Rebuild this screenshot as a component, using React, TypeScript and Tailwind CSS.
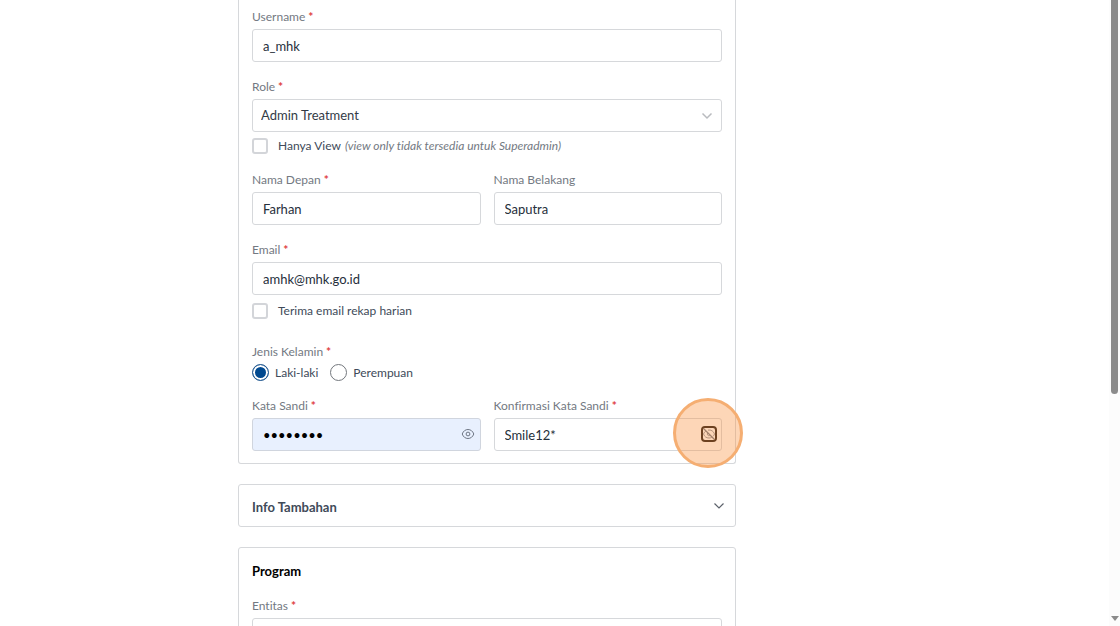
import { useState } from "react";
import type { InputHTMLAttributes, ReactNode } from "react";

const inputClass =
  "block h-[33px] w-full rounded-[3px] border border-[#d6d8db] bg-white px-[10px] pt-px text-[13px] text-[#262f3b] outline-none";

function Required() {
  return <span className="ml-[3px] font-bold text-[#e0403f]">*</span>;
}

function Label({
  htmlFor,
  required,
  children,
}: {
  htmlFor: string;
  required?: boolean;
  children: ReactNode;
}) {
  return (
    <label htmlFor={htmlFor} className="mb-1 block text-xs text-[#737982]">
      {children}
      {required && <Required />}
    </label>
  );
}

function Field({
  id,
  label,
  required,
  ...props
}: {
  id: string;
  label: string;
  required?: boolean;
} & InputHTMLAttributes<HTMLInputElement>) {
  return (
    <div>
      <Label htmlFor={id} required={required}>
        {label}
      </Label>
      <input id={id} className={inputClass} {...props} />
    </div>
  );
}

function Checkbox({ id, children }: { id: string; children: ReactNode }) {
  return (
    <div className="flex h-4 items-center">
      <input
        id={id}
        type="checkbox"
        className="size-4 appearance-none rounded-[3px] border-2 border-[#d3d5d9] bg-white checked:bg-[#004990]"
      />
      <label htmlFor={id} className="pl-[10px] text-xs text-[#404a59]">
        {children}
      </label>
    </div>
  );
}

function Radio({
  id,
  label,
  defaultChecked,
}: {
  id: string;
  label: string;
  defaultChecked?: boolean;
}) {
  return (
    <div className="flex items-center gap-[6px]">
      <input
        id={id}
        type="radio"
        name="gender"
        defaultChecked={defaultChecked}
        className="size-[17px] appearance-none rounded-full border border-[#73777d] bg-white checked:border-[#2c5f94] checked:bg-[#004990] checked:shadow-[inset_0_0_0_2px_white]"
      />
      <label htmlFor={id} className="text-xs text-[#404a59]">
        {label}
      </label>
    </div>
  );
}

function Chevron({ className }: { className?: string }) {
  return (
    <svg viewBox="0 0 12 8" fill="none" stroke="currentColor" className={className}>
      <path d="M1.5 1.5 6 6l4.5-4.5" />
    </svg>
  );
}

function Eye() {
  return (
    <svg viewBox="0 0 14 14" fill="none" stroke="currentColor" className="size-[14px]">
      <path d="M1.2 7C2.3 4 4.5 2.5 7 2.5S11.7 4 12.8 7C11.7 10 9.5 11.5 7 11.5S2.3 10 1.2 7Z" />
      <circle cx="7" cy="7" r="1.9" />
    </svg>
  );
}

function EyeOff() {
  return (
    <svg viewBox="0 0 14 14" fill="none" stroke="currentColor" className="size-[14px]">
      <path d="M2 2l10 10" strokeWidth="1.2" />
      <path
        d="M4 3.8C2.8 4.6 2 5.700 1.500 7 2.500 9.800 4.500 11 7 11c1 0 1.900-.2 2.700-.6M6 3.100C9 2.600 11.500 4 12.500 7c-.3.900-.8 1.700-1.400 2.300M5.600 6a1.800 1.800 0 0 0 2.300 2.600"
        strokeWidth="0.8"
      />
    </svg>
  );
}

function Card({ children }: { children: ReactNode }) {
  return (
    <section className="rounded-[3px] border border-[#d6d8db] bg-white px-[13px]">
      {children}
    </section>
  );
}

export default function App() {
  const [showPassword, setShowPassword] = useState(false);
  const [showConfirm, setShowConfirm] = useState(true);

  return (
    <div className="flex h-screen overflow-hidden bg-white font-[Lato,sans-serif] [font-variant-ligatures:none]">
      <main className="min-w-0 flex-1 overflow-hidden pl-[238px]">
        <form className="flex w-full max-w-[498px] flex-col gap-5">
          {/* account */}
          <section className="rounded-b-[3px] border border-t-0 border-[#d6d8db] px-[13px] pt-[9px] pb-3">
            <div className="flex flex-col gap-[17px]">
              <Field id="username" label="Username" required defaultValue="a_mhk" />

              <div>
                <Label htmlFor="role" required>
                  Role
                </Label>
                <div className="relative">
                  <select
                    id="role"
                    className="block h-[33px] w-full appearance-none rounded-[3px] border border-[#d6d8db] bg-white px-2 pt-px text-[13px] text-[#333b46] outline-none"
                  >
                    <option>Admin Treatment</option>
                  </select>
                  <Chevron className="pointer-events-none absolute top-[13px] right-[9px] h-2 w-3 stroke-[1.5] text-[#b9bbbf]" />
                </div>
                <div className="mt-[6px] pb-px">
                  <Checkbox id="view-only">
                    Hanya View
                    <em className="ml-1 text-[#737982]">
                      (view only tidak tersedia untuk Superadmin)
                    </em>
                  </Checkbox>
                </div>
              </div>

              <div className="grid grid-cols-2 gap-[13px]">
                <Field id="first-name" label="Nama Depan" required defaultValue="Farhan" />
                <Field id="last-name" label="Nama Belakang" defaultValue="Saputra" />
              </div>

              <div>
                <Field
                  id="email"
                  label="Email"
                  type="email"
                  required
                  defaultValue="amhk@mhk.go.id"
                />
                <div className="mt-2">
                  <Checkbox id="daily-email">Terima email rekap harian</Checkbox>
                </div>
              </div>
            </div>

            {/* gender */}
            <fieldset className="mt-[25px]">
              <legend className="text-xs text-[#737982]">
                Jenis Kelamin
                <Required />
              </legend>
              <div className="mt-1 flex gap-3">
                <Radio id="male" label="Laki-laki" defaultChecked />
                <Radio id="female" label="Perempuan" />
              </div>
            </fieldset>

            {/* password */}
            <div className="mt-[17px] grid grid-cols-2 gap-[13px]">
              <div>
                <Label htmlFor="password" required>
                  Kata Sandi
                </Label>
                <div className="relative">
                  <input
                    id="password"
                    type={showPassword ? "text" : "password"}
                    defaultValue="Smile12*"
                    className="block h-[33px] w-full rounded-[3px] border border-[#d0d5de] bg-[#e8f0fe] px-[10px] pt-px text-[13px] text-black outline-none"
                  />
                  <button
                    type="button"
                    aria-label="Tampilkan kata sandi"
                    onClick={() => setShowPassword(!showPassword)}
                    className="absolute top-[9px] right-[6px] text-[#6f7785]"
                  >
                    {showPassword ? <EyeOff /> : <Eye />}
                  </button>
                </div>
              </div>
              <div>
                <Label htmlFor="confirm" required>
                  Konfirmasi Kata Sandi
                </Label>
                <div className="relative">
                  <input
                    id="confirm"
                    type={showConfirm ? "text" : "password"}
                    defaultValue="Smile12*"
                    className={inputClass}
                  />
                  <button
                    type="button"
                    aria-label="Sembunyikan kata sandi"
                    onClick={() => setShowConfirm(!showConfirm)}
                    className="absolute top-[9px] right-[6px] rounded-[3px] text-[#6f7785] outline-2 outline-[#1c1410] outline-solid -outline-offset-1"
                  >
                    {showConfirm ? <EyeOff /> : <Eye />}
                  </button>
                  {/* click marker */}
                  <span className="pointer-events-none absolute -top-[20px] -right-[21px] size-[70px] rounded-full border-3 border-[#f5ae72] bg-[#f98f3c]/37" />
                </div>
              </div>
            </div>
          </section>

          <Card>
            <button
              type="button"
              className="flex h-[41px] w-full items-center justify-between text-[13px] font-bold text-[#404a59]"
            >
              <span className="pt-1">Info Tambahan</span>
              <Chevron className="-mr-[3px] h-2 w-3 stroke-[1.2] text-[#5c626b]" />
            </button>
          </Card>

          <Card>
            <h2 className="pt-[13px] text-[13px] leading-5 font-bold text-black">Program</h2>
            <div className="pt-[17px] pb-4">
              <Field id="entity" label="Entitas" required />
            </div>
          </Card>
        </form>
      </main>

      {/* scrollbar */}
      <div className="flex w-[11px] flex-col items-center justify-between bg-[#fcfcfc]">
        <div className="h-[63%] w-[7px] rounded-b-full bg-[#8b8b8b]" />
        <svg viewBox="0 0 8 5" className="mb-[5px] h-[5px] w-2 fill-[#8b8b8b]">
          <path d="M0 0h8L4 5z" />
        </svg>
      </div>
    </div>
  );
}
